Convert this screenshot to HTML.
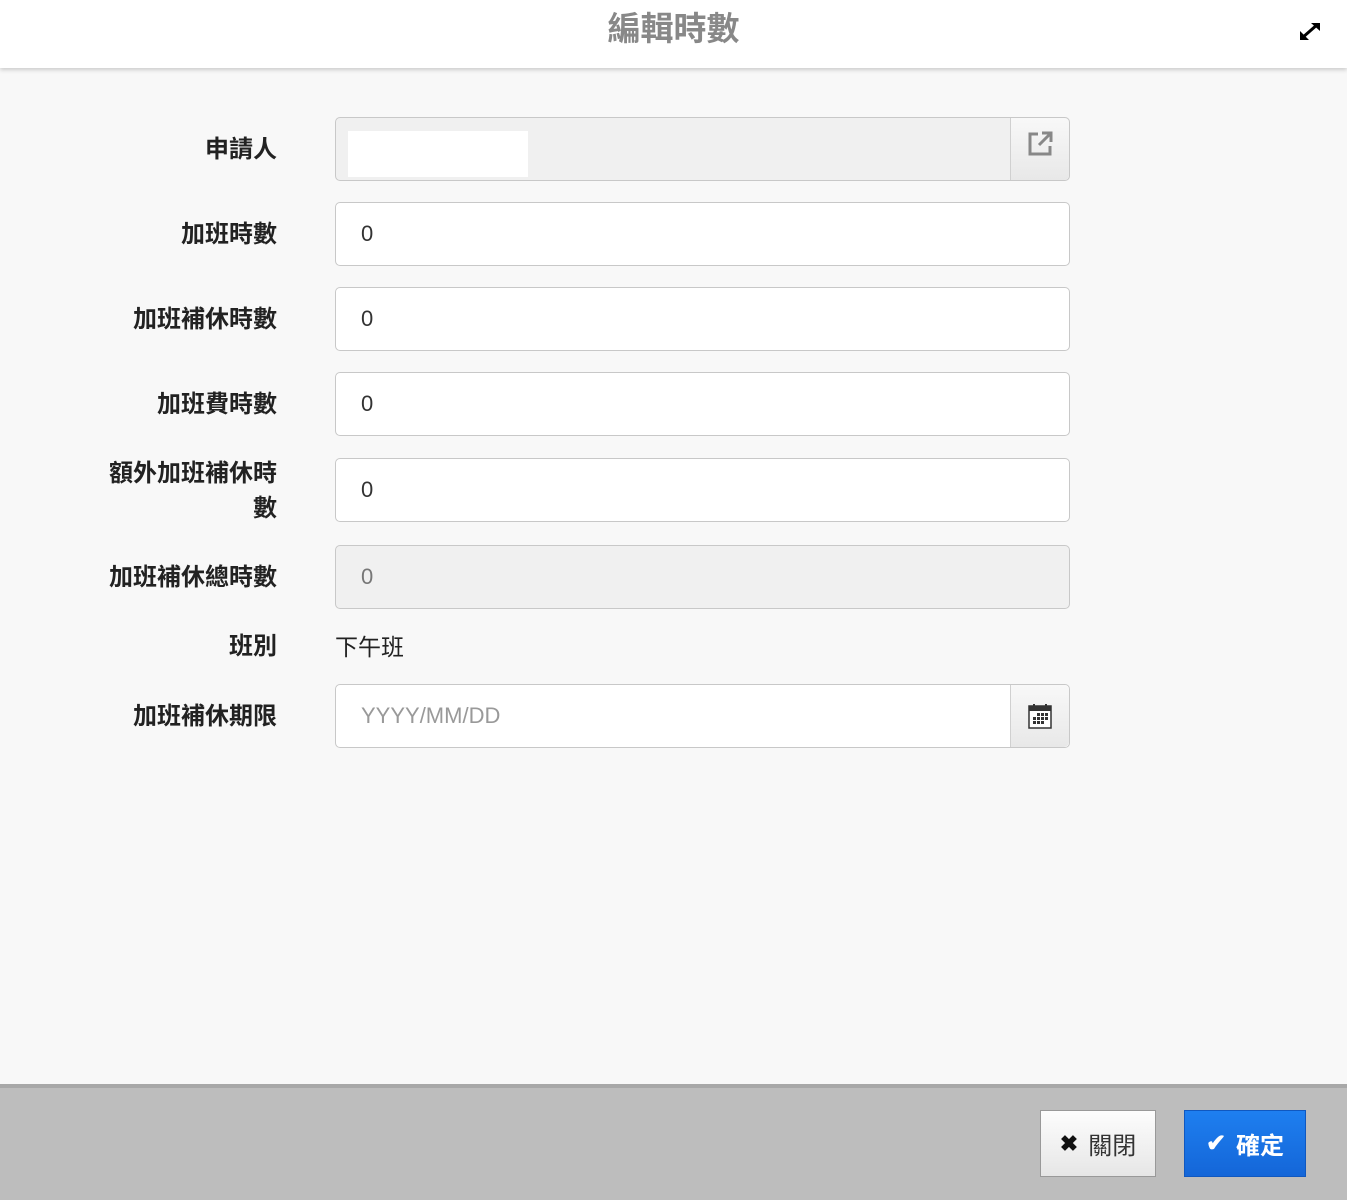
<!DOCTYPE html>
<html><head><meta charset="utf-8"><style>
body{margin:0;width:1347px;height:1200px;position:relative;background:#f8f8f8;font-family:"Liberation Sans","Noto Sans CJK TC",sans-serif;overflow:hidden}
.hdr{position:absolute;left:0;top:0;width:1347px;height:68px;background:#fff;box-shadow:0 2px 4px rgba(0,0,0,.18)}
.hdr h1{margin:0;text-align:center;font-size:33px;line-height:58px;color:#888;font-weight:bold}
.lbl{position:absolute;right:1070px;width:240px;text-align:right;font-size:24px;font-weight:bold;color:#222;line-height:34px}
.in{position:absolute;left:335px;width:733px;height:62px;border:1px solid #c8c8c8;border-radius:5px;background:#fff;box-sizing:content-box;font-size:22px;color:#333;line-height:62px;text-indent:25px}
.dis{background:#f0f0f0;color:#777}
.addon{position:absolute;right:0;top:0;width:58px;height:62px;border-left:1px solid #d0d0d0;background:linear-gradient(#f8f8f8,#e8e8e8);border-radius:0 5px 5px 0;display:flex;align-items:center;justify-content:center}
.ftr{position:absolute;left:0;top:1084px;width:1347px;height:116px;background:#bdbdbd;border-top:4px solid #a8a8a8;box-sizing:border-box}
.btn{position:absolute;top:1110px;height:67px;box-sizing:border-box;font-size:24px;display:flex;align-items:center;justify-content:center;gap:10px}
</style></head><body>
<div class="hdr"><h1>編輯時數</h1>
<svg style="position:absolute;left:1299px;top:21px" width="22" height="20" viewBox="0 0 22 20"><path d="M3 17L19 3" stroke="#000" stroke-width="3"/><path d="M12 2h9v8z M1 10v9h9z" fill="#000"/></svg></div>

<div class="lbl" style="top:133px">申請人</div>
<div class="in dis" style="top:117px"><div style="position:absolute;left:12px;top:13px;width:180px;height:46px;background:#fff"></div>
<div class="addon"><svg width="28" height="28" viewBox="0 0 28 28" style="margin-top:-10px"><path d="M12 4H4v20h20v-8" fill="none" stroke="#888" stroke-width="3"/><path d="M13 15L24 4M16 3h9v9" fill="none" stroke="#888" stroke-width="3"/></svg></div></div>

<div class="lbl" style="top:218px">加班時數</div>
<div class="in" style="top:202px">0</div>
<div class="lbl" style="top:303px">加班補休時數</div>
<div class="in" style="top:287px">0</div>
<div class="lbl" style="top:388px">加班費時數</div>
<div class="in" style="top:372px">0</div>
<div class="lbl" style="top:456px;line-height:35px">額外加班補休時<br>數</div>
<div class="in" style="top:458px">0</div>
<div class="lbl" style="top:561px">加班補休總時數</div>
<div class="in dis" style="top:545px">0</div>
<div class="lbl" style="top:630px">班別</div>
<div style="position:absolute;left:335px;top:630px;font-size:23px;line-height:34px;color:#222">下午班</div>
<div class="lbl" style="top:700px">加班補休期限</div>
<div class="in" style="top:684px;color:#999">YYYY/MM/DD
<div class="addon"><svg width="24" height="26" viewBox="0 0 24 26"><rect x="1" y="3" width="22" height="22" fill="#fff" stroke="#333" stroke-width="1.5"/><rect x="1" y="3" width="22" height="5" fill="#333"/><path d="M6 1v4M18 1v4" stroke="#333" stroke-width="2"/><g fill="#333"><rect x="9" y="10" width="3" height="3"/><rect x="13" y="10" width="3" height="3"/><rect x="17" y="10" width="3" height="3"/><rect x="5" y="14" width="3" height="3"/><rect x="9" y="14" width="3" height="3"/><rect x="13" y="14" width="3" height="3"/><rect x="17" y="14" width="3" height="3"/><rect x="5" y="18" width="3" height="3"/><rect x="9" y="18" width="3" height="3"/><rect x="13" y="18" width="3" height="3"/></g></svg></div></div>

<div class="ftr"></div>
<div class="btn" style="left:1040px;width:116px;background:linear-gradient(#fdfdfd,#e6e6e6);border:1px solid #999;color:#333"><span style="font-size:22px;font-weight:bold;color:#111">✖</span>關閉</div>
<div class="btn" style="left:1184px;width:122px;background:linear-gradient(#1e7ff0,#1466d8);border:1px solid #1058c0;color:#fff;font-weight:bold"><span style="font-size:24px">✔</span>確定</div>
</body></html>
